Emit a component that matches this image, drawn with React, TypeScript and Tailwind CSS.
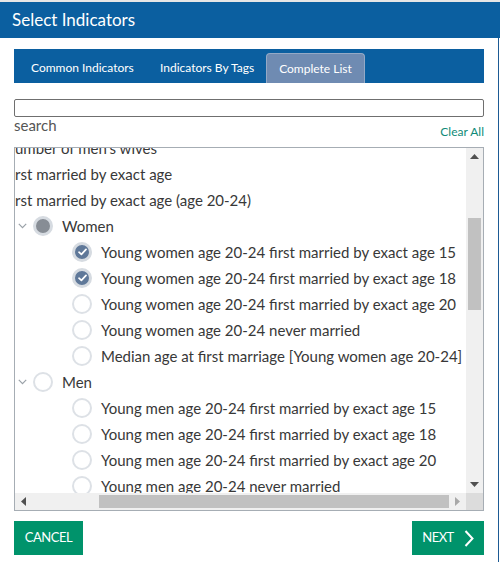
import React from "react";

type Item = { label: string; checked?: boolean };

const women: Item[] = [
  { label: "Young women age 20-24 first married by exact age 15", checked: true },
  { label: "Young women age 20-24 first married by exact age 18", checked: true },
  { label: "Young women age 20-24 first married by exact age 20" },
  { label: "Young women age 20-24 never married" },
  { label: "Median age at first marriage [Young women age 20-24]" },
];

const men: Item[] = [
  { label: "Young men age 20-24 first married by exact age 15" },
  { label: "Young men age 20-24 first married by exact age 18" },
  { label: "Young men age 20-24 first married by exact age 20" },
  { label: "Young men age 20-24 never married" },
];

function Radio({ state }: { state: "on" | "off" | "partial" }) {
  if (state === "partial") {
    return <span className="block h-[20px] w-[20px] shrink-0 rounded-full border-[3px] border-[#d6dbe1] bg-[#878d95]" />;
  }
  if (state === "on") {
    return (
      <span className="flex h-[20px] w-[20px] shrink-0 items-center justify-center rounded-full border-[3px] border-[#d6dbe1] bg-[#5f7899]">
        <svg width="9" height="8" viewBox="0 0 9 8" fill="none">
          <path d="M1 4.2 L3.4 6.4 L8 1.4" stroke="white" strokeWidth="1.7" strokeLinecap="round" strokeLinejoin="round" />
        </svg>
      </span>
    );
  }
  return <span className="block h-[20px] w-[20px] shrink-0 rounded-full border-2 border-[#dde1e6] bg-white" />;
}

function Chevron() {
  return (
    <svg width="9" height="6" viewBox="0 0 9 6" fill="none" className="shrink-0">
      <path d="M0.8 0.8 L4.5 4.6 L8.2 0.8" stroke="#9aa1a8" strokeWidth="1.2" />
    </svg>
  );
}

function Group({ name, state, items }: { name: string; state: "on" | "off" | "partial"; items: Item[] }) {
  return (
    <>
      <div className="flex h-[26px] items-center pl-[3px]">
        <Chevron />
        <span className="ml-[6px]">
          <Radio state={state} />
        </span>
        <span className="ml-[9px]">{name}</span>
      </div>
      {items.map((it) => (
        <div key={it.label} className="flex h-[26px] items-center pl-[57px]">
          <Radio state={it.checked ? "on" : "off"} />
          <span className="ml-[9px]">{it.label}</span>
        </div>
      ))}
    </>
  );
}

export default function App() {
  return (
    <div className="flex h-[562px] w-[500px] flex-col overflow-hidden bg-white font-['Lato',sans-serif]">
      <div className="h-[2px] bg-[#e6e6e6]" />
      <div className="flex h-[36px] items-center bg-[#0b5fa0] px-[12px] text-[17px] text-white">
        Select Indicators
      </div>

      <div className="mr-[1px] flex flex-1 flex-col border-r border-[#1d5a94] px-[14px]">
        {/* tabs */}
        <div className="mt-[11px] flex h-[34px] items-end gap-[2px] bg-[#0b5fa0] pl-[3px] text-[12px] text-white">
          <div className="flex h-[30px] w-[129px] items-center pl-[14px]">Common Indicators</div>
          <div className="flex h-[30px] w-[116px] items-center pl-[12px]">Indicators By Tags</div>
          <div className="flex h-[30px] w-[99px] items-center justify-center rounded-t-[4px] border border-b-0 border-[#94a9c6] bg-[#6f8bb2]">
            Complete List
          </div>
        </div>

        <input className="mt-[16px] h-[18px] w-full rounded-[2px] border border-[#6f6f6f] outline-none" />

        <div className="flex h-[30px] items-start justify-between">
          <span className="text-[15px] leading-[17px] text-[#555]">search</span>
          <span className="mt-[8px] text-[12px] leading-[14px] text-[#0f8a78]">Clear All</span>
        </div>

        {/* list */}
        <div className="grid h-[364px] grid-cols-[1fr_17px] grid-rows-[345px_17px] border border-[#a6adb4]">
          <div className="overflow-hidden whitespace-nowrap text-[15px] text-[#383838]">
            <div className="-mt-[13px]">
              <div className="flex h-[26px] items-center">umber of men's wives</div>
              <div className="flex h-[26px] items-center">rst married by exact age</div>
              <div className="flex h-[26px] items-center">rst married by exact age (age 20-24)</div>
              <Group name="Women" state="partial" items={women} />
              <Group name="Men" state="off" items={men} />
            </div>
          </div>

          <div className="flex flex-col items-center bg-[#f0f0f0]">
            <div className="flex h-[17px] w-full items-center justify-center">
              <svg width="9" height="5" viewBox="0 0 9 5">
                <path d="M0 5 L4.5 0 L9 5 Z" fill="#505050" />
              </svg>
            </div>
            <div className="mt-[53px] h-[92px] w-[13px] bg-[#c1c1c1]" />
            <div className="flex-1" />
            <div className="flex h-[17px] w-full items-center justify-center">
              <svg width="9" height="5" viewBox="0 0 9 5">
                <path d="M0 0 L4.5 5 L9 0 Z" fill="#505050" />
              </svg>
            </div>
          </div>

          <div className="flex items-center bg-[#f0f0f0]">
            <div className="flex h-full w-[16px] items-center justify-center">
              <svg width="5" height="9" viewBox="0 0 5 9">
                <path d="M5 0 L0 4.5 L5 9 Z" fill="#505050" />
              </svg>
            </div>
            <div className="ml-[68px] h-[13px] w-[350px] bg-[#c1c1c1]" />
            <div className="flex h-full flex-1 items-center justify-center">
              <svg width="5" height="9" viewBox="0 0 5 9">
                <path d="M0 0 L5 4.5 L0 9 Z" fill="#a8a8a8" />
              </svg>
            </div>
          </div>
          <div className="bg-[#dcdcdc]" />
        </div>

        {/* footer */}
        <div className="mt-[10px] flex justify-between">
          <button className="flex h-[34px] w-[69px] items-center justify-center bg-[#00936b] text-[13px] tracking-[-0.5px] text-white">
            CANCEL
          </button>
          <button className="flex h-[34px] w-[72px] items-center justify-center gap-[10px] bg-[#00936b] text-[13px] tracking-[-0.5px] text-white">
            NEXT
            <svg width="10" height="17" viewBox="0 0 10 17" fill="none">
              <path d="M1.5 1 L8.5 8.5 L1.5 16" stroke="white" strokeWidth="2" />
            </svg>
          </button>
        </div>
      </div>
    </div>
  );
}
